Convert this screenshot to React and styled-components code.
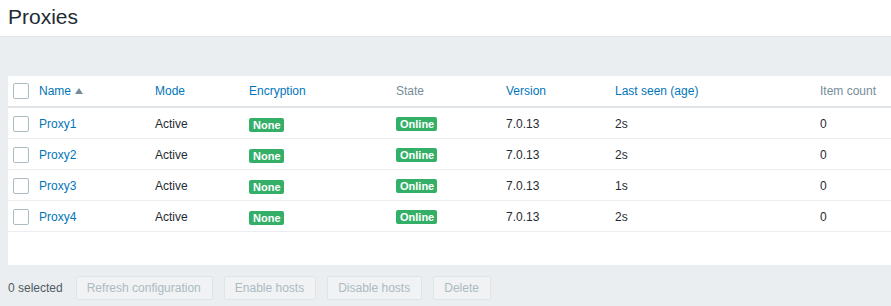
import React from "react";
import styled, { createGlobalStyle } from "styled-components";

const Global = createGlobalStyle`
  html, body { margin: 0; padding: 0; background: #ebeef0; }
  body { font-family: "Liberation Sans", Arial, sans-serif; font-size: 12px; color: #1f2c33; }
`;

const Page = styled.div`
  width: 891px;
  height: 306px;
  overflow: hidden;
  background: #ebeef0;
  display: flex;
  flex-direction: column;
`;

const Header = styled.header`
  height: 36px;
  background: #fff;
  border-bottom: 1px solid #dfe4e7;
  display: flex;
  align-items: center;
  padding: 0 8px;
  flex-shrink: 0;
`;

const Title = styled.h1`
  margin: 0;
  font-size: 21px;
  font-weight: normal;
  color: #1f2c33;
  line-height: 1;
  margin-top: -4px;
`;

const Panel = styled.div`
  margin: 39px 0 0 8px;
  background: #fff;
  min-height: 189px;
  box-sizing: border-box;
  flex-shrink: 0;
`;

const cols = "26px 116px 94px 147px 110px 109px 205px 1fr";

const HeadRow = styled.div`
  display: grid;
  grid-template-columns: ${cols};
  height: 30px;
  border-bottom: 2px solid #dfe4e7;
  align-items: center;
`;

const Row = styled.div`
  display: grid;
  grid-template-columns: ${cols};
  padding-top: 1px;
  box-sizing: border-box;
  height: 31px;
  border-bottom: 1px solid #ebeef0;
  align-items: center;
`;

const Cell = styled.div`
  padding: 0 5px;
  white-space: nowrap;
  display: flex;
  align-items: center;
`;

const HeadCell = styled(Cell)`
  color: ${(p) => (p.$sortable ? "#0275b8" : "#768d99")};
`;

const Link = styled.a`
  color: #0275b8;
  text-decoration: none;
  cursor: pointer;
`;

const SortArrow = styled.span`
  display: inline-block;
  width: 0;
  height: 0;
  margin-left: 4px;
  margin-top: -1px;
  border-left: 4px solid transparent;
  border-right: 4px solid transparent;
  border-bottom: 6px solid #768d99;
`;

const Check = styled.span`
  display: inline-block;
  width: 16px;
  height: 16px;
  box-sizing: border-box;
  border: 1px solid #acbbc2;
  border-radius: 2px;
  background: #fff;
`;

const Badge = styled.span`
  display: inline-block;
  background: #34af67;
  color: #fff;
  font-weight: bold;
  font-size: 11px;
  line-height: 14px;
  padding: 0 3px 0 4px;
  border-radius: 2px;
  margin-top: ${(p) => p.$offset || 0}px;
`;

const Footer = styled.div`
  display: flex;
  align-items: center;
  padding: 11px 8px;
  gap: 11px;
`;

const Selected = styled.span`
  color: #4f5b61;
  margin-right: 2px;
`;

const Button = styled.button`
  height: 24px;
  padding: 0 11px 0 10px;
  font-family: inherit;
  font-size: 12px;
  color: #acbbc2;
  background: #f0f2f3;
  border: 1px solid #dfe4e7;
  border-radius: 2px;
`;

const proxies = [
  { name: "Proxy1", seen: "2s" },
  { name: "Proxy2", seen: "2s" },
  { name: "Proxy3", seen: "1s" },
  { name: "Proxy4", seen: "2s" },
];

export default function App() {
  return (
    <Page>
      <Global />
      <Header>
        <Title>Proxies</Title>
      </Header>
      <Panel>
        <HeadRow>
          <Cell><Check /></Cell>
          <HeadCell $sortable>Name<SortArrow /></HeadCell>
          <HeadCell $sortable>Mode</HeadCell>
          <HeadCell $sortable>Encryption</HeadCell>
          <HeadCell>State</HeadCell>
          <HeadCell $sortable>Version</HeadCell>
          <HeadCell $sortable>Last seen (age)</HeadCell>
          <HeadCell>Item count</HeadCell>
        </HeadRow>
        {proxies.map((p) => (
          <Row key={p.name}>
            <Cell><Check /></Cell>
            <Cell><Link>{p.name}</Link></Cell>
            <Cell>Active</Cell>
            <Cell><Badge $offset={2}>None</Badge></Cell>
            <Cell><Badge>Online</Badge></Cell>
            <Cell>7.0.13</Cell>
            <Cell>{p.seen}</Cell>
            <Cell>0</Cell>
          </Row>
        ))}
      </Panel>
      <Footer>
        <Selected>0 selected</Selected>
        <Button disabled>Refresh configuration</Button>
        <Button disabled>Enable hosts</Button>
        <Button disabled>Disable hosts</Button>
        <Button disabled>Delete</Button>
      </Footer>
    </Page>
  );
}
